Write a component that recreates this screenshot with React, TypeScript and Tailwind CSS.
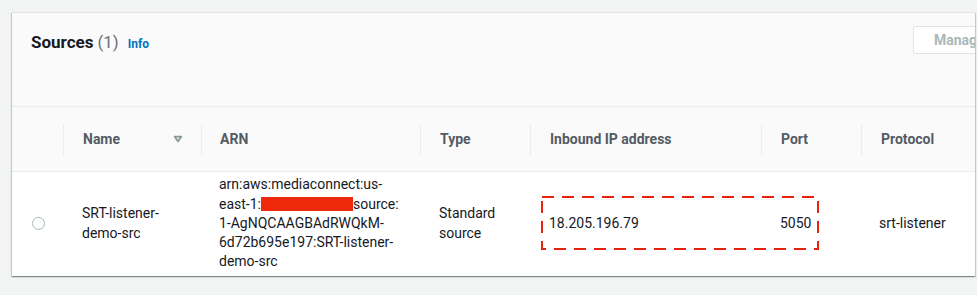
import React from "react";

const font = { fontFamily: "Roboto, 'Liberation Sans', sans-serif" };

function Sep() {
  return <div className="w-px h-[31px] bg-[#eaeded] shrink-0" />;
}

export default function App() {
  return (
    <div className="w-[977px] h-[295px] bg-[#f2f3f3] pt-[12px] pl-[12px] overflow-hidden" style={font}>
      <div className="relative w-[963px] h-[264px] bg-white overflow-hidden shadow-[0_1px_1px_0_rgba(0,28,36,0.3),1px_1px_1px_0_rgba(0,28,36,0.15),-1px_1px_1px_0_rgba(0,28,36,0.15)] border-t border-[#e1e4e4]">
        {/* header */}
        <div className="h-[94px] bg-[#fafafa] border-b border-[#eaeded] flex justify-between items-start pt-[13px]">
          <div className="flex items-baseline pl-[19px] mt-[4px] h-[26px]">
            <span className="text-[17px] font-bold text-[#16191f]">Sources</span>
            <span className="text-[17px] text-[#687078] ml-[4px]">(1)</span>
            <span className="text-[12px] font-bold text-[#0073bb] ml-[9px]">Info</span>
          </div>
          <div className="h-[28px] w-[100px] shrink-0 bg-white border border-[#e1e4e4] rounded-[2px] flex items-center pl-[20px] text-[14px] font-bold text-[#aab7b8] mr-[-38px]">
            Manage
          </div>
        </div>
        {/* column headers */}
        <div className="h-[65px] bg-[#fafafa] border-b border-[#eaeded] grid grid-cols-[51px_138px_219px_110px_231px_100px_114px] items-center text-[14px] font-bold text-[#545b64]">
          <div />
          <div className="flex items-center">
            <Sep />
            <span className="ml-[19px]">Name</span>
            <svg className="ml-[53px]" width="10" height="8" viewBox="0 0 10 8">
              <polygon points="1.5,1.5 8.5,1.5 5,6.5" fill="#d5dbdb" stroke="#879596" strokeWidth="1.5" strokeLinejoin="round" />
            </svg>
          </div>
          <div className="flex items-center">
            <Sep />
            <span className="ml-[18px]">ARN</span>
          </div>
          <div className="flex items-center">
            <Sep />
            <span className="ml-[19px]">Type</span>
          </div>
          <div className="flex items-center">
            <Sep />
            <span className="ml-[19px]">Inbound IP address</span>
          </div>
          <div className="flex items-center">
            <Sep />
            <span className="ml-[19px]">Port</span>
          </div>
          <div className="flex items-center">
            <Sep />
            <span className="ml-[19px]">Protocol</span>
          </div>
        </div>
        {/* data row */}
        <div className="relative h-[103px] grid grid-cols-[51px_138px_219px_110px_231px_100px_114px] items-center text-[14px] leading-[19.3px] text-[#16191f]">
          <div className="pl-[20px] flex items-center">
            <div className="w-[13px] h-[13px] rounded-full border border-[#aab7b8] bg-white" />
          </div>
          <div className="pl-[19px]">
            <div>SRT-listener-</div>
            <div>demo-src</div>
          </div>
          <div className="pl-[18px] whitespace-nowrap">
            <div>arn:aws:mediaconnect:us-</div>
            <div className="flex items-center">
              <span>east-1:</span>
              <span className="inline-block w-[92px] h-[14px] bg-[#ee2a0c]" />
              <span>source:</span>
            </div>
            <div>1-AgNQCAAGBAdRWQkM-</div>
            <div>6d72b695e197:SRT-listener-</div>
            <div>demo-src</div>
          </div>
          <div className="pl-[19px]">
            <div>Standard</div>
            <div>source</div>
          </div>
          <div className="pl-[19px]">18.205.196.79</div>
          <div className="pl-[19px]">5050</div>
          <div className="pl-[18px]">srt-listener</div>
          <svg className="absolute left-[529px] top-[24px]" width="278" height="54" viewBox="0 0 278 54">
            <rect x="1" y="1" width="276" height="52" fill="none" stroke="#e8230c" strokeWidth="2" strokeDasharray="12 8" />
          </svg>
        </div>
      </div>
    </div>
  );
}
